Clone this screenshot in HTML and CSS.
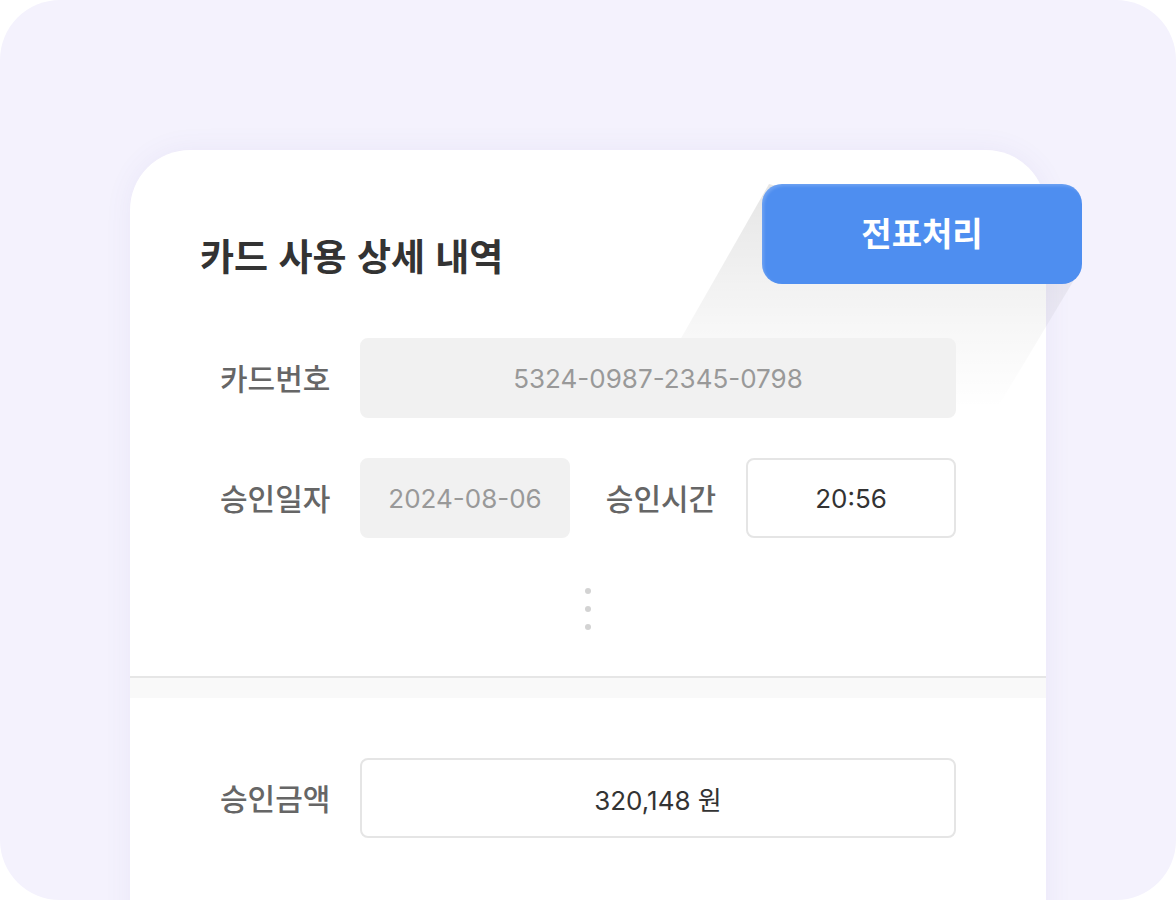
FILE: index.html
```html
<!DOCTYPE html>
<html lang="ko">
<head>
    <meta charset="UTF-8">
    <meta name="viewport" content="width=device-width, initial-scale=1.0">
    <title>카드 사용 상세 내역</title>
    <link rel="stylesheet" href="styles.css">
</head>
<body>
    <div class="frame">
        <div class="card">
            <div class="long-shadow"></div>
            <button class="slip-button">전표처리</button>

            <h2 class="card-title">카드 사용 상세 내역</h2>

            <div class="rows">
                <div class="row">
                    <span class="label">카드번호</span>
                    <div class="field field-disabled">5324-0987-2345-0798</div>
                </div>
                <div class="row row-split">
                    <span class="label">승인일자</span>
                    <div class="field field-disabled">2024-08-06</div>
                    <span class="label label-center">승인시간</span>
                    <div class="field">20:56</div>
                </div>
            </div>

            <div class="more-dots">
                <span></span>
                <span></span>
                <span></span>
            </div>

            <div class="divider"></div>

            <div class="rows rows-bottom">
                <div class="row">
                    <span class="label">승인금액</span>
                    <div class="field">320,148 원</div>
                </div>
            </div>
        </div>
    </div>
</body>
</html>
```

FILE: styles.css
```css
html, body {
    margin: 0;
    padding: 0;
    background: #ffffff;
}
body {
    font-family: Inter, "Noto Sans CJK KR", sans-serif;
    width: 1176px;
    height: 900px;
    overflow: hidden;
}
.frame {
    width: 1176px;
    height: 900px;
    border-radius: 60px;
    background: #f4f2fd;
    overflow: hidden;
    padding: 150px 0 0 130px;
    box-sizing: border-box;
}
.card {
    position: relative;
    width: 916px;
    height: 800px;
    background: #ffffff;
    border-radius: 60px 60px 0 0;
    box-shadow: 0 0 28px rgba(100, 80, 190, 0.07);
    padding-top: 84px;
    box-sizing: border-box;
}
.long-shadow {
    position: absolute;
    left: 480px;
    top: 30px;
    width: 480px;
    height: 270px;
    background: linear-gradient(to bottom, rgba(0, 0, 0, 0.1), rgba(0, 0, 0, 0.03) 55%, rgba(0, 0, 0, 0) 85%);
    clip-path: polygon(159px 4px, 470px 90px, 368px 260px, 13px 260px);
}
.slip-button {
    position: absolute;
    left: 632px;
    top: 34px;
    width: 320px;
    height: 100px;
    border: none;
    border-radius: 20px;
    background: #4e8ef0;
    box-shadow: inset 2px 2px 3px rgba(255, 255, 255, 0.18);
    color: #ffffff;
    font-family: "Noto Sans CJK KR", sans-serif;
    font-size: 33px;
    font-weight: 700;
    padding: 0 0 4px;
    z-index: 2;
}
.card-title {
    position: relative;
    margin: 0 0 0 70px;
    font-family: "Noto Sans CJK KR", sans-serif;
    font-size: 37px;
    line-height: 42px;
    font-weight: 700;
    color: #333333;
}
.rows {
    position: relative;
    z-index: 1;
    padding: 0 90px;
    margin-top: 62px;
    display: flex;
    flex-direction: column;
    gap: 40px;
}
.row {
    display: grid;
    grid-template-columns: 140px 1fr;
    align-items: center;
}
.row-split {
    grid-template-columns: 140px 210px 176px 210px;
}
.label {
    font-family: "Noto Sans CJK KR", sans-serif;
    font-size: 30px;
    font-weight: 500;
    color: #666666;
    padding-bottom: 2px;
}
.label-center {
    text-align: center;
    padding-left: 6px;
}
.field {
    height: 80px;
    box-sizing: border-box;
    border: 2px solid #e5e5e5;
    border-radius: 8px;
    background: #ffffff;
    display: flex;
    align-items: center;
    justify-content: center;
    font-size: 26px;
    color: #333333;
}
.field-disabled {
    border-color: #f1f1f1;
    background: #f1f1f1;
    color: #999999;
}
.more-dots {
    margin-top: 50px;
    display: flex;
    flex-direction: column;
    align-items: center;
    gap: 12px;
}
.more-dots span {
    width: 6px;
    height: 6px;
    border-radius: 50%;
    background: #d3d3d3;
}
.divider {
    margin-top: 46px;
    height: 20px;
    border-top: 2px solid #e6e6e6;
    background: #f9f9f9;
}
.rows-bottom {
    margin-top: 60px;
}
```
